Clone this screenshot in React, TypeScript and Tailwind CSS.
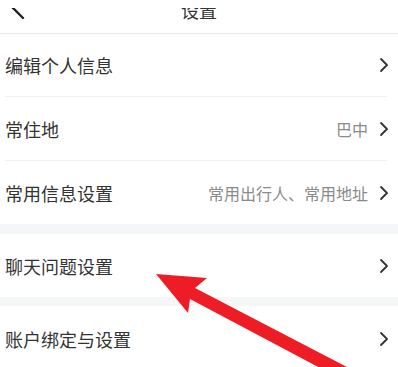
import React from "react";

const font = { fontFamily: '"Noto Sans CJK SC", "Noto Sans", sans-serif' };

function Chevron() {
  return (
    <svg width="10" height="16" viewBox="0 0 10 16" className="shrink-0">
      <polyline points="2,2 8,8 2,14" fill="none" stroke="#333" strokeWidth="1.8" strokeLinecap="round" strokeLinejoin="round" />
    </svg>
  );
}

function Row({ label, value, h = "h-[63px]" }: { label: string; value?: string; h?: string }) {
  return (
    <div className={`${h} flex items-center pl-[5px] pr-[9px]`}>
      <div className="flex-1 text-[18px] leading-none text-[#333333]">{label}</div>
      {value && <div className="text-[16px] leading-none text-[#8a8a8a] mr-[11px]">{value}</div>}
      <Chevron />
    </div>
  );
}

function Divider() {
  return <div className="h-px bg-[#f0f0f0] ml-[5px] mr-[11px]" />;
}

export default function App() {
  return (
    <div className="relative w-[398px] h-[367px] overflow-hidden bg-white" style={font}>
      <div className="pt-[8px]">
        <div className="h-[26px] overflow-hidden border-b border-[#ebebeb]">
          <div className="-mt-[8px] h-[33px] flex items-start">
            <div className="w-[40px] h-[33px]">
              <svg width="40" height="33" viewBox="0 0 40 33" overflow="visible">
                <polyline points="23,-4 12,7 23,18" fill="none" stroke="#222" strokeWidth="2.4" strokeLinecap="round" strokeLinejoin="round" />
              </svg>
            </div>
            <div className="flex-1 text-center text-[18px] leading-[18px] text-[#333333] mt-[1px]">设置</div>
            <div className="w-[40px]" />
          </div>
        </div>
      </div>
      <Row label="编辑个人信息" h="h-[62px]" />
      <Divider />
      <Row label="常住地" value="巴中" />
      <Divider />
      <Row label="常用信息设置" value="常用出行人、常用地址" />
      <div className="h-[10px] bg-[#f5f6f8]" />
      <Row label="聊天问题设置" />
      <div className="h-[9px] bg-[#f5f6f8]" />
      <Row label="账户绑定与设置" h="h-[66px]" />
      <svg className="absolute inset-0 pointer-events-none" width="398" height="367" viewBox="0 0 398 367">
        <polygon points="156,274 207,278 195,288 400,394.6 371,395 190,299 188,313" fill="#ee1c25" />
      </svg>
    </div>
  );
}
